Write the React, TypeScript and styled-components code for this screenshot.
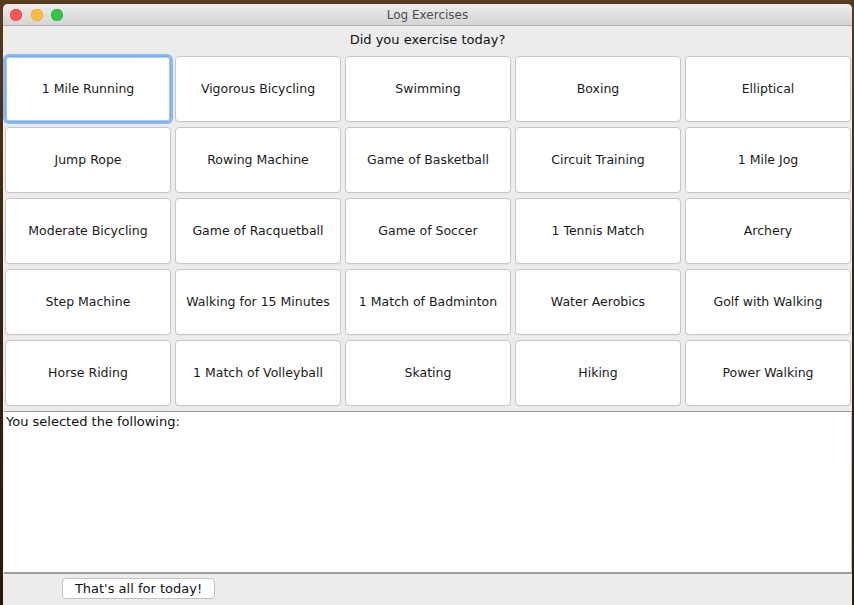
import React from "react";
import styled, { createGlobalStyle } from "styled-components";

const Global = createGlobalStyle`
  html, body { margin: 0; padding: 0; }
  body {
    width: 854px;
    height: 605px;
    overflow: hidden;
    background: linear-gradient(180deg, #5a3a1c 0%, #3b2410 40%, #2a1a0c 100%);
    font-family: "DejaVu Sans", "Liberation Sans", sans-serif;
  }
`;

const Desktop = styled.div`
  display: flex;
  padding: 4px 2px 0 3px;
  height: 605px;
  box-sizing: border-box;
`;

const Window = styled.div`
  flex: 1;
  display: flex;
  flex-direction: column;
  background: #ececec;
  border-radius: 5px 5px 0 0;
  overflow: hidden;
`;

const TitleBar = styled.div`
  position: relative;
  height: 20px;
  flex: none;
  display: flex;
  align-items: center;
  justify-content: center;
  background: linear-gradient(180deg, #ebebeb 0%, #d5d5d5 100%);
  border-bottom: 1px solid #b1b1b1;
  font-size: 12px;
  color: #4d4d4d;
  padding-top: 1px;
  box-sizing: content-box;
`;

const Lights = styled.div`
  position: absolute;
  left: 7px;
  top: 5px;
  display: flex;
  gap: 8.5px;
`;

const Light = styled.span<{ $c: string; $b: string }>`
  width: 12px;
  height: 12px;
  border-radius: 50%;
  background: ${(p) => p.$c};
  box-shadow: inset 0 0 0 0.5px ${(p) => p.$b};
`;

const Prompt = styled.div`
  height: 30px;
  flex: none;
  display: flex;
  align-items: center;
  justify-content: center;
  font-size: 13px;
  color: #111;
  padding-bottom: 3px;
  box-sizing: border-box;
`;

const Grid = styled.div`
  display: grid;
  grid-template-columns: repeat(5, 166px);
  grid-auto-rows: 66px;
  column-gap: 4px;
  row-gap: 5px;
  padding: 0 1px 0 2px;
`;

const ExButton = styled.button<{ $focus?: boolean }>`
  all: unset;
  box-sizing: border-box;
  display: flex;
  align-items: center;
  justify-content: center;
  background: #fff;
  border: 1px solid #c6c6c6;
  border-radius: 4px;
  font-family: "DejaVu Sans", "Liberation Sans", sans-serif;
  font-size: 12.5px;
  color: #1a1a1a;
  padding-bottom: 2px;
  box-shadow: ${(p) =>
    p.$focus ? "0 0 0 2px #8cb8ef, inset 0 0 0 1px #a9cbf5" : "0 0.5px 0 rgba(0,0,0,0.05)"};
  border-color: ${(p) => (p.$focus ? "#7aaeea" : "#c6c6c6")};
`;

const Output = styled.div`
  margin: 5px 0 0 1px;
  height: 163px;
  flex: none;
  background: #fff;
  border-top: 1px solid #9a9a9a;
  border-right: 1px solid #c8c8c8;
  border-bottom: 2px solid #9c9c9c;
  box-sizing: border-box;
  font-size: 13px;
  color: #111;
  padding: 2px 2px;
`;

const Footer = styled.div`
  flex: 1;
  display: flex;
  align-items: flex-start;
  padding: 4px 0 0 59px;
`;

const DoneButton = styled.button`
  all: unset;
  box-sizing: border-box;
  width: 153px;
  height: 21px;
  background: #fff;
  border: 1px solid #c3c3c3;
  border-radius: 4px;
  font-family: "DejaVu Sans", "Liberation Sans", sans-serif;
  font-size: 13px;
  color: #111;
  display: flex;
  align-items: center;
  justify-content: center;
`;

const exercises = [
  "1 Mile Running", "Vigorous Bicycling", "Swimming", "Boxing", "Elliptical",
  "Jump Rope", "Rowing Machine", "Game of Basketball", "Circuit Training", "1 Mile Jog",
  "Moderate Bicycling", "Game of Racquetball", "Game of Soccer", "1 Tennis Match", "Archery",
  "Step Machine", "Walking for 15 Minutes", "1 Match of Badminton", "Water Aerobics", "Golf with Walking",
  "Horse Riding", "1 Match of Volleyball", "Skating", "Hiking", "Power Walking",
];

export default function App() {
  return (
    <>
      <Global />
      <Desktop>
        <Window>
          <TitleBar>
            <Lights>
              <Light $c="#fc5753" $b="#df3d39" />
              <Light $c="#fdbc40" $b="#de9f34" />
              <Light $c="#33c748" $b="#27aa35" />
            </Lights>
            Log Exercises
          </TitleBar>
          <Prompt>Did you exercise today?</Prompt>
          <Grid>
            {exercises.map((e, i) => (
              <ExButton key={e} $focus={i === 0}>{e}</ExButton>
            ))}
          </Grid>
          <Output>You selected the following:</Output>
          <Footer>
            <DoneButton>That's all for today!</DoneButton>
          </Footer>
        </Window>
      </Desktop>
    </>
  );
}
